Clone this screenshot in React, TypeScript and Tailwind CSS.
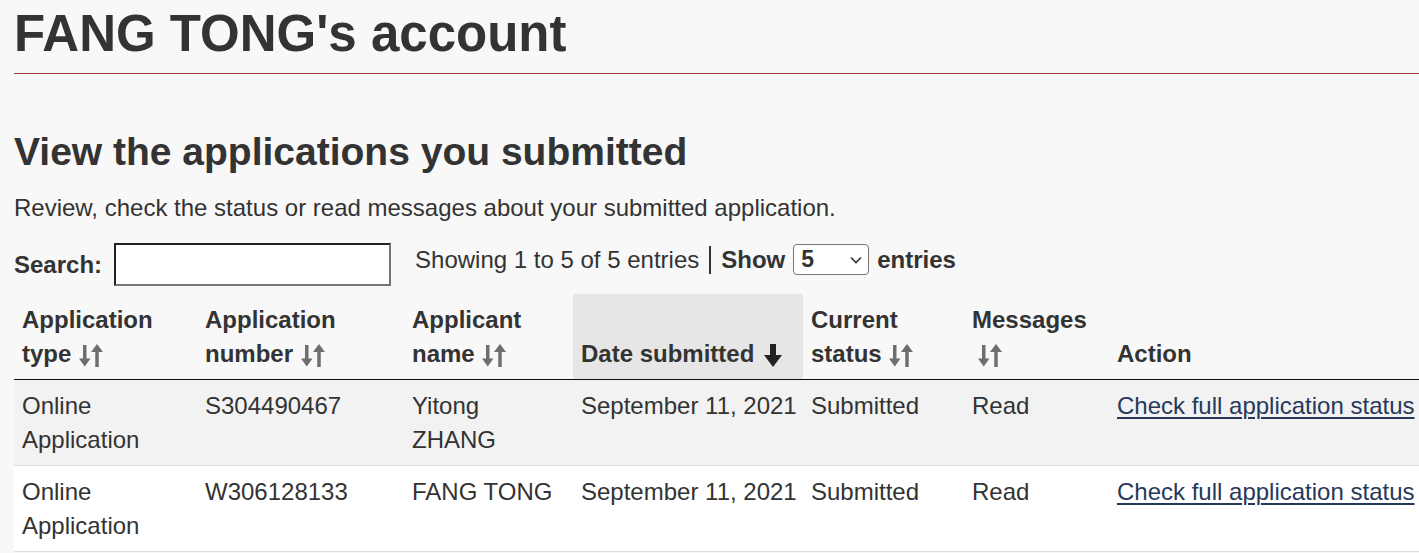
import React from 'react';

type Row = {
  type: string[];
  number: string;
  name: string[];
  date: string;
  status: string;
  messages: string;
};

const rows: Row[] = [
  {
    type: ['Online', 'Application'],
    number: 'S304490467',
    name: ['Yitong', 'ZHANG'],
    date: 'September 11, 2021',
    status: 'Submitted',
    messages: 'Read',
  },
  {
    type: ['Online', 'Application'],
    number: 'W306128133',
    name: ['FANG TONG'],
    date: 'September 11, 2021',
    status: 'Submitted',
    messages: 'Read',
  },
];

function SortIcon({ className = '' }: { className?: string }) {
  return (
    <svg width="24" height="23" viewBox="0 0 24 23" className={`inline-block ${className}`} fill="#6e6e6e">
      <rect x="4" y="1" width="3.5" height="15" />
      <polygon points="0,14.5 11.5,14.5 5.75,22.5" />
      <polygon points="12,8 24,8 18,0" />
      <rect x="16.25" y="6" width="3.5" height="17" />
    </svg>
  );
}

function SortDownIcon() {
  return (
    <svg width="18" height="23" viewBox="0 0 18 23" className="inline-block ml-[10px]" fill="#222">
      <rect x="6" y="0" width="6" height="12" />
      <polygon points="0,11 18,11 9,23" />
    </svg>
  );
}

export default function App() {
  const th = 'px-2 pt-[9px] pb-2 text-left align-bottom font-bold border-b border-[#111]';
  const td = 'px-2 pt-[9px] pb-2 align-top border-b border-[#dddddd]';

  return (
    <div className="min-h-screen bg-[#f8f8f8] overflow-hidden pl-[14px] text-[#333] font-['Liberation_Sans',Arial,sans-serif]">
      <div className="w-[1430px]">
        <div className="pt-[5px] pb-[10px] border-b border-[#a33a3a]">
          <h1 className="text-[51px] leading-[58px] font-bold">FANG TONG's account</h1>
        </div>

        <h2 className="mt-[55px] text-[39px] leading-[46px] font-bold">View the applications you submitted</h2>
        <p className="mt-[16px] text-[24px] leading-[34px]">
          Review, check the status or read messages about your submitted application.
        </p>

        <div className="mt-[18px] flex items-start text-[24px]">
          <label className="font-bold leading-[43px]">Search:</label>
          <input
            type="text"
            className="ml-[12px] w-[277px] h-[43px] bg-white border-2 border-t-[#222] border-l-[#222] border-r-[#767676] border-b-[#767676] outline-none"
          />
          <div className="ml-[24px] mt-[1px] h-[31px] flex items-center">
            <span>Showing 1 to 5 of 5 entries</span>
            <span className="mx-[10px] w-[2px] h-[28px] bg-[#333]" />
            <span className="font-bold">Show</span>
            <div className="ml-[8px] w-[76px] h-[31px] bg-white border border-[#767676] rounded-[4px] flex items-center justify-between pl-[7px] pr-[6px]">
              <span className="font-bold text-[23px] leading-none">5</span>
              <svg width="12" height="8" viewBox="0 0 12 8" fill="none" stroke="#333" strokeWidth="1.6">
                <polyline points="1,1.5 6,6.5 11,1.5" />
              </svg>
            </div>
            <span className="ml-[8px] font-bold">entries</span>
          </div>
        </div>

        <table className="mt-[8px] table-fixed border-collapse text-[24px] leading-[34px] w-[1430px]">
          <colgroup>
            <col className="w-[183px]" />
            <col className="w-[207px]" />
            <col className="w-[169px]" />
            <col className="w-[230px]" />
            <col className="w-[161px]" />
            <col className="w-[145px]" />
            <col />
          </colgroup>
          <thead>
            <tr>
              <th className={th}>
                Application
                <br />
                type <SortIcon className="ml-[1px]" />
              </th>
              <th className={th}>
                Application
                <br />
                number <SortIcon className="ml-[1px]" />
              </th>
              <th className={th}>
                Applicant
                <br />
                name <SortIcon className="ml-[1px]" />
              </th>
              <th className={`${th} bg-[#e6e6e6]`}>
                Date submitted
                <SortDownIcon />
              </th>
              <th className={th}>
                Current
                <br />
                status <SortIcon className="ml-[1px]" />
              </th>
              <th className={th}>
                Messages
                <br />
                <SortIcon className="ml-[6px]" />
              </th>
              <th className={th}>Action</th>
            </tr>
          </thead>
          <tbody>
            {rows.map((r, i) => (
              <tr key={r.number} className={i % 2 === 0 ? 'bg-[#f2f2f2]' : 'bg-white'}>
                <td className={td}>
                  {r.type.map((t) => (
                    <div key={t}>{t}</div>
                  ))}
                </td>
                <td className={td}>{r.number}</td>
                <td className={td}>
                  {r.name.map((t) => (
                    <div key={t}>{t}</div>
                  ))}
                </td>
                <td className={`${td} whitespace-nowrap`}>{r.date}</td>
                <td className={td}>{r.status}</td>
                <td className={td}>{r.messages}</td>
                <td className={td}>
                  <a href="#" className="text-[#27395a] underline decoration-[2px] underline-offset-[3px] whitespace-nowrap">
                    Check full application status
                  </a>
                </td>
              </tr>
            ))}
          </tbody>
        </table>
      </div>
    </div>
  );
}
